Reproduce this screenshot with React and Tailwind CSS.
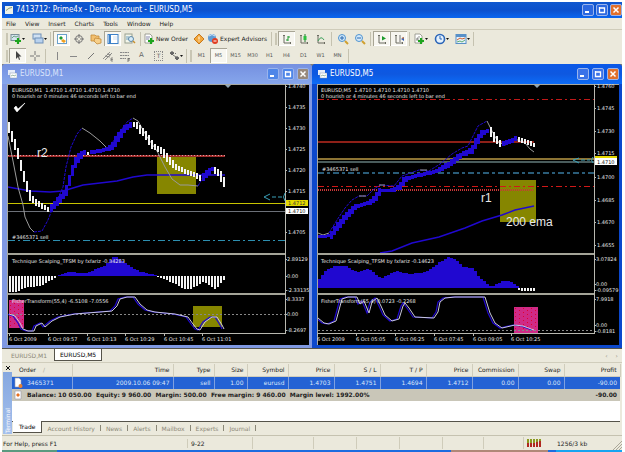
import React, { useState } from "react";

const BLUE = "#2008d0";
const WHITE = "#f4f4f4";
const GREY = "#9a9a9a";
const OLIVE = "#868600";

// linear interpolation on a list of [x, y] points
const at = (pts, x) => {
  for (let i = 1; i < pts.length; i++) {
    if (x <= pts[i][0]) {
      const [x0, y0] = pts[i - 1];
      const [x1, y1] = pts[i];
      return y0 + ((y1 - y0) * (x - x0)) / (x1 - x0);
    }
  }
  return pts[pts.length - 1][1];
};

const steps = (from, to, step) => {
  const out = [];
  for (let x = from; x <= to; x += step) out.push(x);
  return out;
};

const chartM1 = {
  x: 7,
  text: 12,
  header: "EURUSD,M1  1.4710 1.4710 1.4710 1.4710",
  sub: "0 hourish or 0 minutes 46 seconds left to bar end",
  axisX: 285,
  marker: 228,
  candles: [
    [WHITE, [[9, 127], [13, 140], [17, 149], [20, 162], [25, 180], [31, 198], [36, 202], [43, 207], [49, 210]]],
    [BLUE, [[51, 208], [55, 204], [60, 198], [67, 189], [70, 176], [74, 164], [80, 155], [84, 152]]],
    [WHITE, [[88, 153], [90, 153]]],
    [BLUE, [[91, 152], [97, 151], [108, 149], [113, 145], [118, 137], [125, 128], [132, 124]]],
    [WHITE, [[134, 124], [137, 125], [140, 129], [147, 137], [153, 146], [162, 151], [168, 159], [175, 167], [185, 171], [195, 175], [202, 179]]],
    [BLUE, [[203, 177], [207, 173], [212, 169], [214, 170]]],
    [WHITE, [[215, 170], [220, 174], [225, 184]]],
  ],
  bands: [
    [GREY, "8,136 13,161 18,187 23,205 25,217 30,228 34,232"],
    [BLUE, "34,232 42,231 48,220 53,207 58,198 63,187 66,167 71,147 77,134 82,128"],
    [GREY, "82,128 90,133 100,141 108,149"],
    [BLUE, "108,149 117,136 127,122 133,118"],
    [GREY, "133,118 138,121 147,137 157,151 160,157 165,167 172,179 180,185 188,185 198,186"],
    [BLUE, "198,186 203,177 208,170 213,168"],
  ],
  ema: "8,187 30,191 50,192 63,191 83,185 117,181 133,177 147,175 225,175",
  zero: 276,
  hist: [
    [WHITE, [[9, 292], [17, 292], [22, 288], [28, 287], [40, 286], [48, 281], [56, 277]]],
    [BLUE, [[58, 275], [67, 272], [85, 273], [95, 269], [103, 266], [109, 260], [112, 257], [116, 257], [122, 262], [130, 267], [140, 272], [155, 275]]],
    [WHITE, [[157, 277], [165, 280], [175, 284], [182, 289], [190, 289], [197, 285], [203, 281], [210, 287], [215, 289], [222, 281], [225, 278]]],
  ],
  histTitle: "Technique Scalping_TFSM by fxfariz -0.34283",
  fisherTitle: "FisherTransform(55,4) -6.5108 -7.0556",
  fisher:
    "9,314 15,316 20,323 23,329 28,331 34,331 36,326 42,323 45,327 52,321 60,317 75,314 100,312 112,311 117,306 120,299 127,297 135,297 140,304 147,310 155,312 175,314 188,317 193,324 197,329 200,330 205,322 212,317 217,317 222,325 224,329",
  fisherZero: 314,
  scale: [
    ["1.4740", 86], ["1.4735", 107], ["1.4730", 128], ["1.4725", 149], ["1.4720", 170], ["1.4715", 191], ["1.4705", 232],
    ["2.89129", 259], ["0.00", 276], ["-2.33135", 290], ["8.3337", 299], ["0.00", 314], ["-8.2697", 330],
  ],
  times: [["6 Oct 2009", 9], ["6 Oct 09:57", 48], ["6 Oct 10:13", 87], ["6 Oct 10:29", 125], ["6 Oct 10:45", 164], ["6 Oct 11:01", 202]],
};

const chartM5 = {
  x: 317,
  text: 321,
  header: "EURUSD,M5  1.4710 1.4710 1.4710 1.4710",
  sub: "0 hourish or 4 minutes 46 seconds left to bar end",
  axisX: 594,
  marker: 537,
  candles: [
    [BLUE, [[319, 237], [330, 236], [337, 227], [345, 217], [355, 207], [369, 203], [375, 198], [380, 191], [392, 190], [399, 187], [405, 179], [415, 176], [429, 173], [439, 170], [449, 164], [459, 156], [465, 153], [472, 149], [477, 140], [482, 133], [488, 131]]],
    [WHITE, [[491, 132], [495, 138], [501, 144]]],
    [BLUE, [[503, 144], [510, 141], [517, 138]]],
    [WHITE, [[519, 139], [527, 142], [534, 145]]],
  ],
  bands: [
    [GREY, "318,233 323,235 329,233"],
    [BLUE, "329,233 337,220 345,208 352,200 359,196 367,196 374,189 380,185 394,186 402,176 419,170 429,171 440,164 452,154 462,148 468,146 473,136 478,126 487,121"],
    [GREY, "359,196 366,196"],
    [GREY, "379,185 385,185"],
    [GREY, "420,170 427,170"],
    [GREY, "487,121 492,131 498,142 505,145 515,139 525,143 530,149 534,152"],
  ],
  ema: "380,253 392,251 412,243 439,237 465,228 482,221 502,215 515,210 534,206",
  zero: 288,
  hist: [
    [BLUE, [[318, 279], [325, 270], [334, 266], [345, 266], [355, 272], [367, 269], [380, 278], [395, 271], [409, 274], [425, 272], [437, 263], [447, 257], [454, 259], [462, 267], [472, 268], [478, 277], [485, 283], [490, 287], [495, 284], [502, 281], [508, 281], [517, 287]]],
    [WHITE, [[518, 290], [524, 291], [534, 291]]],
  ],
  histTitle: "Technique Scalping_TFSM by fxfariz -0.14623",
  fisherTitle: "FisherTransform(55,4) 0.0723 -0.2268",
  fisher:
    "318,318 324,323 329,324 336,321 339,310 342,299 348,297 357,297 360,304 364,301 369,313 372,302 377,298 381,306 385,315 392,321 399,319 403,306 405,303 409,308 415,317 434,318 438,312 440,302 445,298 455,297 485,297 490,313 495,323 502,328 515,325 523,326 534,330",
  fisherZero: 330,
  scale: [
    ["1.4760", 86], ["1.4745", 108], ["1.4730", 131], ["1.4715", 153], ["1.4700", 177], ["1.4685", 200], ["1.4670", 222], ["1.4655", 245],
    ["3.07824", 259], ["0.00", 284], ["-0.09579", 290], ["7.9918", 299], ["0.00", 325], ["-0.8181", 331],
  ],
  times: [["6 Oct 2009", 317], ["6 Oct 05:05", 356], ["6 Oct 06:25", 395], ["6 Oct 07:45", 434], ["6 Oct 09:05", 473], ["6 Oct 10:25", 511]],
};

const Rule = ({ c, y, to, stroke, dash, w = 1 }) => (
  <path d={`M${c.x + 1} ${y + w / 2}H${to || c.axisX}`} stroke={stroke} strokeDasharray={dash} strokeWidth={w} />
);

function PinkBox({ x, y, w, h }) {
  return (
    <g>
      <rect x={x} y={y} width={w} height={h} fill="#cf2a86" />
      {steps(x + 1, x + w - 2, 4).map((dx, i) =>
        steps(y + 1 + (i % 2) * 2, y + h - 2, 4).map((dy) => (
          <rect key={`${dx}-${dy}`} x={dx} y={dy} width="1" height="1" fill="#e00030" />
        ))
      )}
    </g>
  );
}

// price panel, histogram panel and fisher panel share one x axis
function Chart({ c, lines, boxes, notes, tags, label }) {
  return (
    <svg
      role="img"
      aria-label={label}
      viewBox={`${c.x} 84 302 261`}
      className="block w-full bg-black font-['DejaVu_Sans',sans-serif] text-[5px]"
      fill="#e8e8e8"
    >
      <g shapeRendering="crispEdges" fill="none">
        {boxes}
        {lines}
      </g>
      <g fill="none">
        <polyline points={c.ema} stroke={BLUE} strokeWidth="1.4" />
        {c.bands.map(([stroke, points]) => (
          <polyline key={points} points={points} stroke={stroke} strokeDasharray={stroke === BLUE ? "3 1" : undefined} />
        ))}
      </g>
      <g shapeRendering="crispEdges">
        {c.candles.map(([fill, pts], i) =>
          steps(pts[0][0], pts[pts.length - 1][0], 3).map((x) => {
            const y = at(pts, x);
            const h = Math.min(11, 3 + Math.abs(at(pts, x + 2) - at(pts, x - 2)) * 1.2);
            return <rect key={`${i}-${x}`} x={x - 1} y={Math.round(y - h / 2)} width={fill === BLUE ? 3 : 2} height={Math.round(h)} fill={fill} />;
          })
        )}
        {c.hist.map(([fill, pts], i) =>
          steps(pts[0][0], pts[pts.length - 1][0], 3).map((x) => {
            const y = at(pts, x);
            return (
              <rect key={`${i}-${x}`} x={x} y={Math.min(y, c.zero)} width={fill === BLUE ? 3 : 2} height={Math.max(1, Math.abs(y - c.zero))} fill={fill} />
            );
          })
        )}
        <Rule c={c} y={c.fisherZero} stroke="#888" dash="2 2" />
      </g>
      <polyline points={c.fisher} fill="none" stroke={BLUE} strokeWidth="1.2" transform="translate(-2 0)" />
      <polyline points={c.fisher} fill="none" stroke="#c9c9dd" strokeWidth="1" />

      <g shapeRendering="crispEdges">
        <path d={`M${c.x} 84h302v1H${c.x + 1}V345h-1z`} fill="#a9a9a0" />
        <path d={`M${c.x} 253h${c.axisX - c.x}v2H${c.x}zM${c.x} 293h${c.axisX - c.x}v2H${c.x}z`} fill="#a4a498" />
        <path d={`M${c.x} 333.5H${c.axisX}M${c.axisX + 0.5} 84V334`} stroke="#b8b8b0" />
        {c.scale.map(([t, y], i) => (
          <rect key={i} x={c.axisX} y={y} width="2" height="1" fill="#b8b8b0" />
        ))}
        {c.times.map(([t, x]) => (
          <rect key={t} x={x} y="333" width="1" height="3" fill="#b8b8b0" />
        ))}
      </g>
      <path d={`M${c.marker - 3} 85h6l-3 3z`} fill="#8fa5b5" />

      <text x={c.text} y="92" xmlSpace="preserve">{c.header}</text>
      <text x={c.text} y="98">{c.sub}</text>
      <text x={c.text} y="263">{c.histTitle}</text>
      <text x={c.text} y="303">{c.fisherTitle}</text>
      {c.scale.map(([t, y], i) => (
        <text key={i} x={c.axisX + (y > 254 ? 2 : 3)} y={y + 2}>{t}</text>
      ))}
      {c.times.map(([t, x]) => (
        <text key={t} x={x} y="341">{t}</text>
      ))}
      {notes}
      {tags}
    </svg>
  );
}

const m1Lines = (
  <>
    <Rule c={chartM1} y={155} to={225} stroke="#a02c2c" w={2} />
    <Rule c={chartM1} y={155} to={225} stroke="#d8a0a0" dash="1 2" />
    <Rule c={chartM1} y={203} stroke="#c8c400" />
    <Rule c={chartM1} y={211} stroke="#6c7078" />
    <Rule c={chartM1} y={240} stroke="#2d8fb0" dash="7 3 2 3" />
  </>
);

const m5Lines = (
  <>
    <Rule c={chartM5} y={99} stroke="#c01818" dash="6 3 2 3" />
    <Rule c={chartM5} y={141} to={534} stroke="#8e2018" w={2} />
    <Rule c={chartM5} y={158} stroke="#8c7434" w={2} />
    <Rule c={chartM5} y={161} stroke="#4a5c5c" w={2} />
    <Rule c={chartM5} y={172} stroke="#2a5c78" dash="6 3 3 3" w={2} />
    <Rule c={chartM5} y={186} stroke="#d01818" dash="6 3 2 3" />
    <Rule c={chartM5} y={189} to={534} stroke="#c83838" dash="1 1" w={2} />
  </>
);

const NOTE = "font-['Liberation_Sans',sans-serif] text-[12px]";

const m1Notes = (
  <>
    <path d="M14 108l3 4 8-9-7 6-2-3z" fill="#fff" stroke="#fff" strokeWidth=".6" />
    <text x="37" y="157" className={NOTE}>r2</text>
    <text x="12" y="239">#3465371 sell</text>
    <path d="M270 194l-6 3 6 3M272 197h4M278 197h4M285 193q-3 4 0 8" stroke="#3aa0b8" fill="none" />
  </>
);

const m5Notes = (
  <>
    <text x="481" y="202" className={NOTE}>r1</text>
    <text x="506" y="226" className={NOTE}>200 ema</text>
    <text x="322" y="171">#3465371 sell</text>
    <path d="M579 158l-6 2 6 3M581 160h4M587 160h3M593 157q-3 3 0 6" stroke="#3aa0b8" fill="none" />
  </>
);

const m1Tags = (
  <>
    <rect x="286" y="200" width="22" height="6" fill="#e4d800" />
    <text x="288" y="205" fill="#333">1.4712</text>
    <rect x="286" y="208" width="22" height="6" fill="#fff" />
    <text x="288" y="213" fill="#111">1.4710</text>
  </>
);

const m5Tags = (
  <>
    <rect x="595" y="156" width="22" height="3" fill="#e4d800" />
    <rect x="595" y="158" width="22" height="7" fill="#fff" />
    <text x="597" y="164" fill="#111">1.4710</text>
  </>
);

/* ---------- icons ---------- */

const Svg = ({ children, w = 12 }) => (
  <svg aria-hidden="true" width={w} height="12" viewBox={`0 0 ${w} 12`} fill="none" className="shrink-0">
    {children}
  </svg>
);

const Plus = ({ x, y }) => <path d={`M${x} ${y - 3}v6M${x - 3} ${y}h6`} stroke="#1ea51e" strokeWidth="2.2" />;
const Axes = () => <path d="M3 2v8h7M2 3l1-1 1 1M9 9l1 1-1 1" stroke="#6b6b60" />;
const Doc = () => <path d="M2 1h5l2 2v7H2z" fill="#fff" stroke="#8a8a80" strokeWidth=".8" />;

const ICONS = {
  newChart: <><rect x="1" y="1.500" width="8" height="6" fill="#d5e4ee" stroke="#7a8f98" /><path d="M2 5l2-2 2 1 2-1" stroke="#55906a" strokeWidth=".8" /><Plus x={8} y={8} /></>,
  profiles: <><rect x="1" y="1" width="8" height="5" fill="#cfe0f2" stroke="#6f90b8" /><rect x="3" y="5" width="8" height="5" fill="#b9d2ee" stroke="#6f90b8" /></>,
  market: <><rect x="1.500" y="1.500" width="9" height="9" fill="#fff" stroke="#6aa0cc" /><path d="M3 5l2-2 2 2-2 2z" fill="#1f9a30" /><path d="M5 8l2-2 3 2-2 2z" fill="#f0a020" /></>,
  target: <><circle cx="6" cy="6" r="3.500" stroke="#777" /><path d="M6 1v4M6 7v4M1 6h4M7 6h4" stroke="#777" /></>,
  folder: <><path d="M1 2h4l1 1h3v5H1z" fill="#f2c070" stroke="#c48a38" strokeWidth=".8" /><path d="M5 5l6 1v4l-4 1-3-3z" fill="#f7d08a" stroke="#c48a38" strokeWidth=".8" /></>,
  terminal: <><rect x="1" y="1.500" width="10" height="9" fill="#fff" stroke="#3c80c8" /><path d="M3 2v8" stroke="#3c80c8" strokeWidth="2" /><path d="M6 4h4M6 6h4" stroke="#cfdff0" /></>,
  tester: <><rect x="1" y="1" width="7" height="9" fill="#f4f6ea" stroke="#98a090" /><path d="M2 4h3M2 6h3" stroke="#6f9fc0" /><circle cx="7" cy="6" r="2.500" fill="#d6ebf8" stroke="#5d88a8" /><path d="M9 8l2 2" stroke="#c8902c" strokeWidth="1.500" /></>,
  order: <><Doc /><path d="M3 4h4M3 6h3" stroke="#88a" /><Plus x={8} y={8} /></>,
  meta: <><path d="M6 1l5 5-5 5-5-5z" fill="#f2a83c" stroke="#c8781c" /><path d="M6 3.500v3M6 7.500v1" stroke="#fff" /></>,
  expert: <><circle cx="5" cy="5" r="4" fill="#5f9bd4" /><path d="M2 3q3-3 6 0" stroke="#d8e8f8" /><circle cx="8" cy="8" r="3" fill="#e03c20" /><path d="M6.500 8h3" stroke="#fff" /></>,
  bars: <><Axes /><path d="M7 3v5M7 4h2M5 7h2" stroke="#1c9a2c" /></>,
  candle: <><Axes /><path d="M7 1v8" stroke="#1c7a2c" /><rect x="5.500" y="3" width="3" height="4" fill="#2cc040" /></>,
  line: <><Axes /><path d="M3 8q3-6 6-1" stroke="#3aa05a" /></>,
  zoomIn: <><path d="M8 8l3 3" stroke="#d0a030" strokeWidth="2" /><circle cx="5" cy="5" r="3.500" fill="#d4e9fa" stroke="#4f93cf" /><path d="M3 5h4M5 3v4" stroke="#2868b0" /></>,
  zoomOut: <><path d="M8 8l3 3" stroke="#d0a030" strokeWidth="2" /><circle cx="5" cy="5" r="3.500" fill="#d4e9fa" stroke="#4f93cf" /><path d="M3 5h4" stroke="#2868b0" /></>,
  scroll: <><Axes /><path d="M6 3l4 2.500-4 2z" fill="#1c9a2c" /></>,
  shift: <><Axes /><path d="M7 2v7" stroke="#777" /><path d="M11 4L8 6l3 2z" fill="#3060c0" /><path d="M9 5h2" stroke="#e07020" /></>,
  indicators: <><Doc /><path d="M4 8q0-5 3-4M3 6h3" stroke="#777" strokeWidth=".8" /><Plus x={8} y={8} /></>,
  clock: <><circle cx="6" cy="6" r="4.500" fill="#e4f1fc" stroke="#2c66b8" strokeWidth="1.600" /><path d="M6 3v3h2" stroke="#2c66b8" /></>,
  template: <><rect x="1" y="1.500" width="10" height="9" fill="#e6f1fa" stroke="#5890c8" /><path d="M1 3h10" stroke="#5890c8" strokeWidth="2" /><path d="M2 7l3-2 2 1 3-1" stroke="#d06030" /><path d="M2 9l3-1 2 1 3-2" stroke="#3a9a50" strokeWidth=".8" /></>,
  cursor: <path d="M4 1v8l2-2 1 3 1-.500-1-3h2.500z" fill="#444" />,
  cross: <path d="M6 1v4M6 7v4M1 6h4M7 6h4" stroke="#777" />,
  vline: <path d="M6.500 2v8" stroke="#888" />,
  hline: <path d="M2 6.500h7" stroke="#888" />,
  trend: <path d="M3 9l6-6" stroke="#777" />,
  channel: <><path d="M1 9l7-7M3 10l7-7M3 6l5 1M5 4l4 1" stroke="#777" strokeWidth=".8" /><path d="M9 8h2M9 8v3h2M9 9.500h2" stroke="#555" strokeWidth=".6" /></>,
  fibo: <><path d="M1 2.500h9M1 5.500h9M1 8.500h6" stroke="#888" strokeDasharray="2 .5" /><path d="M9 8v4M9 8.500h2M9 10h2" stroke="#555" strokeWidth=".7" /></>,
  arrows: <path d="M2 3l2-1.500L6 3 4 5zM5 5l3 2M7 8l2-1.500L11 8 9 10zM7 4l1-1" stroke="#555" strokeWidth=".8" fill="#666" />,
};

const Caret = () => (
  <svg aria-hidden="true" width="3" height="2" viewBox="0 0 3 2" className="shrink-0"><path d="M0 0h3L1.500 2z" fill="#111" /></svg>
);

const Grip = () => <span className="mx-px h-3 w-[2px] shrink-0 border-x border-[#c9c6b4]" />;
const Sep = () => <span className="mx-[2px] h-[14px] w-px shrink-0 bg-[#c5c2b0]" />;

function Tool({ icon, label, text, glyph, pressed, menu }) {
  return (
    <button
      type="button"
      title={label || text}
      aria-label={label || text}
      className={`flex h-[15px] min-w-[17px] shrink-0 items-center justify-center ${
        pressed ? "bg-[#f7f6f0] shadow-[inset_1px_1px_0_#a8a595,inset_-1px_-1px_0_#fff]" : ""
      }`}
    >
      {icon && <Svg>{ICONS[icon]}</Svg>}
      {glyph}
      {text && icon && <span className="pl-px pr-[2px]">{text}</span>}
      {menu && <Caret />}
    </button>
  );
}

function WinButton({ kind, tone, label }) {
  return (
    <button type="button" aria-label={label} className={`flex size-3 items-center justify-center rounded-[2px] border border-[#9ab4ec] ${tone}`}>
      <svg aria-hidden="true" width="8" height="8" viewBox="0 0 8 8" fill="none" stroke="#fff">
        {kind === "min" && <path d="M1 6h4" strokeWidth="2" />}
        {kind === "max" && <path d="M1.500 1v5.500h5V2h-5" strokeWidth="1.300" />}
        {kind === "close" && <path d="M1.500 1.500l5 5M6.500 1.500l-5 5" strokeWidth="1.500" />}
      </svg>
    </button>
  );
}

const TITLE = "grow font-['DejaVu_Sans_Condensed','DejaVu_Sans',sans-serif] text-[8px] leading-none font-medium";

function ChartWindow({ title, active, children }) {
  const tone = active ? "bg-[#3a72e8]" : "bg-[#4f86e8]";
  return (
    <section className={`min-w-0 rounded-t-[4px] pb-[3px] pl-[5px] pr-[3px] ${active ? "bg-[#0c48cc]" : "bg-[#7f98e2]"}`}>
      <header
        className={`-ml-[5px] -mr-[3px] flex h-5 items-center gap-[3px] rounded-t-[4px] pl-[6px] pr-[3px] text-white ${
          active ? "bg-linear-to-b from-[#0a58e8] via-[#0e58e0] to-[#0c6cf8]" : "bg-linear-to-b from-[#7590e0] to-[#86a6ec]"
        }`}
      >
        <Svg w={9}>
          <rect x="0" y="2" width="7" height="5" fill="#e8eefa" />
          <rect x="2" y="5" width="7" height="5" fill="#fff" stroke="#89a" strokeWidth=".5" />
          <path d="M3 8l2-1 1 1 2-1" stroke="#5a8a6a" strokeWidth=".6" />
        </Svg>
        <h2 className={`${TITLE} ${active ? "" : "text-[#dbe4fa]"}`}>{title}</h2>
        <WinButton kind="min" tone={tone} label={`Minimize ${title}`} />
        <WinButton kind="max" tone={tone} label={`Maximize ${title}`} />
        <WinButton kind="close" tone={active ? "bg-[#e0702c]" : "bg-[#98897c]"} label={`Close ${title}`} />
      </header>
      {children}
    </section>
  );
}

const COLUMNS = [
  ["Order", "w-[60px]"], ["Time", "w-[101px]"], ["Type", "w-[41px]"], ["Size", "w-[33px]"], ["Symbol", "w-[41px]"], ["Price", "w-[46px]"],
  ["S / L", "w-[46px]"], ["T / P", "w-[46px]"], ["Price", "w-[46px]"], ["Commission", "w-[46px]"], ["Swap", "w-[46px]"], ["Profit", "w-[56px]"],
];
const ORDER = ["3465371", "2009.10.06 09:47", "sell", "1.00", "eurusd", "1.4703", "1.4751", "1.4694", "1.4712", "0.00", "0.00", "-90.00"];
const TABS = ["Trade", "Account History", "News", "Alerts", "Mailbox", "Experts", "Journal"];

function Terminal() {
  const [tab, setTab] = useState("Trade");
  return (
    <section className="flex pt-px">
      <div className="flex w-[10px] shrink-0 flex-col pl-px">
        <button type="button" aria-label="Close terminal" className="flex h-2 items-center justify-center">
          <svg aria-hidden="true" width="4" height="4" viewBox="0 0 4 4"><path d="M0 0l4 4M4 0L0 4" stroke="#111" /></svg>
        </button>
        <div className="flex grow items-end justify-center bg-linear-to-b from-[#86a8e0] to-[#a4c0ec] pb-px">
          <span className="rotate-180 text-[6px] leading-none text-white [writing-mode:vertical-rl]">Terminal</span>
        </div>
      </div>
      <div className="min-w-0 grow pr-[2px]">
        <div className="h-[58px] border-b border-[#55534a] bg-white">
          <table className="w-full table-fixed border-collapse text-right leading-none">
            <thead>
              <tr className="h-3 bg-[#ebe9dc]">
                {COLUMNS.map(([name, width], i) => (
                  <th key={i} scope="col" className={`${width} border-r border-b border-[#d0cdbc] p-0 pr-[3px] font-normal ${i === 0 ? "pl-[7px] text-left" : ""}`}>
                    {name}{i === 0 && <span className="pl-[7px] text-[#aaa798]">/</span>}
                  </th>
                ))}
              </tr>
            </thead>
            <tbody>
              <tr className="h-3 bg-[#2462d4] text-[#dce6fa]">
                {ORDER.map((v, i) => (
                  <td key={i} className={`border-r border-[#7fa0e0] p-0 pr-[3px] last:border-r-0 ${i === 0 ? "text-left" : ""}`}>
                    {i === 0 ? (
                      <span className="flex items-center gap-1 pl-px">
                        <Svg w={10}><path d="M2 1h4l2 2v7H2z" fill="#fff" stroke="#99a" strokeWidth=".6" /><circle cx="7.500" cy="9" r="2" fill="#e88030" /></Svg>
                        {v}
                      </span>
                    ) : v}
                  </td>
                ))}
              </tr>
              <tr className="h-3 bg-[#c9c6b8] font-bold">
                <td colSpan={11} className="p-0 text-left">
                  <span className="flex items-center gap-1 pl-px">
                    <Svg w={10}><path d="M2 2h6v8H2z" fill="#fff" stroke="#99a" strokeWidth=".6" /><path d="M5 4l2 2-2 2-2-2z" fill="#e87020" /></Svg>
                    <span className="whitespace-pre">Balance: 10 050.00  Equity: 9 960.00  Margin: 500.00  Free margin: 9 460.00  Margin level: 1992.00%</span>
                  </span>
                </td>
                <td className="p-0 pr-[3px]">-90.00</td>
              </tr>
            </tbody>
          </table>
        </div>
        <nav aria-label="Terminal" className="flex h-3 items-center pl-px text-[#8b8878]">
          {TABS.map((t) =>
            t === tab ? (
              <button key={t} type="button" onClick={() => setTab(t)} className="-mt-[2px] h-3 border-r border-b border-[#55534a] bg-white px-[6px] text-black">
                {t}
              </button>
            ) : (
              <React.Fragment key={t}>
                <button type="button" onClick={() => setTab(t)} className="px-[5px]">{t}</button>
                <span className="h-[6px] w-px bg-[#8b8878]" />
              </React.Fragment>
            )
          )}
        </nav>
      </div>
    </section>
  );
}

export default function App() {
  const [period, setPeriod] = useState("M5");
  return (
    <div className="min-h-screen bg-white pt-[2px] pl-[2px] pr-[3px] font-['DejaVu_Sans',sans-serif] text-[6px] text-[#222]">
      <div className="bg-[#ebe9dc]">
        <header className="flex h-4 items-center gap-[3px] bg-linear-to-b from-[#1058d0] via-[#0c50cc] to-[#0a66f0] pl-[3px] text-white">
          <Svg w={8}><path d="M0 2h8v8H0z" fill="#eef2e8" /><path d="M1 6q3-3 6-3v1q-3 0-6 3z" fill="#8a9a70" /></Svg>
          <h1 className={TITLE}>7413712: Prime4x - Demo Account - EURUSD,M5</h1>
          <div className="flex gap-[2px]">
            <WinButton kind="min" tone="bg-[#2c68e0]" label="Minimize" />
            <WinButton kind="max" tone="bg-[#2c68e0]" label="Restore" />
            <WinButton kind="close" tone="bg-[#e0702c]" label="Close" />
          </div>
        </header>

        <nav aria-label="Menu" className="flex h-3 items-center border-b border-[#cfccba] pl-[4px]">
          {["File", "View", "Insert", "Charts", "Tools", "Window", "Help"].map((m) => (
            <button key={m} type="button" className="pr-[9px]">{m}</button>
          ))}
        </nav>

        <div role="toolbar" aria-label="Standard" className="flex h-[17px] items-center overflow-hidden pl-[3px]">
          <Grip />
          <Tool icon="newChart" label="New chart" menu />
          <span className="w-[5px]" />
          <Tool icon="profiles" label="Profiles" menu />
          <Sep />
          <Tool icon="market" label="Market watch" pressed />
          <Tool icon="target" label="Data window" />
          <Tool icon="folder" label="Navigator" />
          <Tool icon="terminal" label="Terminal" pressed />
          <Tool icon="tester" label="Strategy tester" />
          <Sep />
          <Tool icon="order" text="New Order" />
          <Tool icon="meta" label="MetaEditor" />
          <Tool icon="expert" text="Expert Advisors" />
          <Sep />
          <Grip />
          <Tool icon="bars" label="Bar chart" pressed />
          <Tool icon="candle" label="Candlesticks" />
          <Tool icon="line" label="Line chart" />
          <Sep />
          <Tool icon="zoomIn" label="Zoom in" />
          <Tool icon="zoomOut" label="Zoom out" />
          <Sep />
          <Tool icon="scroll" label="Auto scroll" pressed />
          <Tool icon="shift" label="Chart shift" pressed />
          <Sep />
          <Tool icon="indicators" label="Indicators" menu />
          <span className="w-[4px]" />
          <Tool icon="clock" label="Periods" menu />
          <span className="w-[4px]" />
          <Tool icon="template" label="Templates" menu />
          <Sep />
        </div>

        <div role="toolbar" aria-label="Line studies and periods" className="flex h-[17px] items-center overflow-hidden pl-[3px]">
          <Grip />
          <Tool icon="cursor" label="Cursor" pressed />
          <Tool icon="cross" label="Crosshair" />
          <Sep />
          <Tool icon="vline" label="Vertical line" />
          <Tool icon="hline" label="Horizontal line" />
          <Tool icon="trend" label="Trendline" />
          <Tool icon="channel" label="Channel" />
          <Tool icon="fibo" label="Fibonacci" />
          <Tool label="Text" glyph={<span className="text-[7px] text-[#666]">A</span>} />
          <Tool label="Text label" glyph={<span className="border border-dotted border-[#888] px-[2px] text-[6px] leading-[8px] text-[#666]">T</span>} />
          <Tool icon="arrows" label="Arrows" menu />
          <Sep />
          <Grip />
          {["M1", "M5", "M15", "M30", "H1", "H4", "D1", "W1", "MN"].map((p) => (
            <button
              key={p}
              type="button"
              onClick={() => setPeriod(p)}
              className={`h-[15px] w-[17px] shrink-0 text-[5px] text-[#555] ${p === period ? "bg-[#f7f6f0] shadow-[inset_1px_1px_0_#a8a595,inset_-1px_-1px_0_#fff]" : ""}`}
            >
              {p}
            </button>
          ))}
          <Sep />
        </div>

        <main className="grid grid-cols-2 bg-[#80807a]">
          <ChartWindow title="EURUSD,M1">
            <Chart
              c={chartM1}
              label="EURUSD one minute chart"
              lines={m1Lines}
              boxes={
                <>
                  <rect x="157" y="157" width="39" height="37" fill={OLIVE} />
                  <rect x="193" y="306" width="29" height="21" fill={OLIVE} />
                  <PinkBox x={9} y={300} w={15} h={28} />
                </>
              }
              notes={m1Notes}
              tags={m1Tags}
            />
          </ChartWindow>
          <ChartWindow title="EURUSD,M5" active>
            <Chart
              c={chartM5}
              label="EURUSD five minute chart"
              lines={m5Lines}
              boxes={
                <>
                  <rect x="500" y="180" width="36" height="42" fill={OLIVE} />
                  <PinkBox x={514} y={307} w={24} h={26} />
                </>
              }
              notes={m5Notes}
              tags={m5Tags}
            />
          </ChartWindow>
        </main>

        <nav aria-label="Charts" className="flex h-[15px] items-start border-t border-b border-t-[#55534a] border-b-[#d0cdbc] pl-[3px] text-[#8b8878]">
          <button type="button" className="h-3 pl-[6px] pr-[7px]">EURUSD,M1</button>
          <button type="button" className="h-3 border-x border-b border-[#55534a] bg-white px-[5px] text-black">EURUSD,M5</button>
          <span className="grow" />
          <button type="button" aria-label="Scroll left" className="h-3 px-1">‹</button>
          <button type="button" aria-label="Scroll right" className="h-3 px-1">›</button>
        </nav>

        <Terminal />

        <footer className="mt-px flex h-[15px] items-center border-t border-[#c5c2b0] pl-px">
          <span className="w-[184px]">For Help, press F1</span>
          <span className="w-[65px] border-l border-[#cfccba] pl-[3px]">9-22</span>
          <span className="h-3 w-[61px] border-l border-[#cfccba]" />
          <span className="h-3 w-[43px] border-l border-[#cfccba]" />
          <span className="h-3 w-[43px] border-l border-[#cfccba]" />
          <span className="h-3 w-[43px] border-l border-[#cfccba]" />
          <span className="h-3 w-[41px] border-l border-[#cfccba]" />
          <span className="h-3 w-[40px] border-l border-[#cfccba]" />
          <span className="flex h-3 grow items-center gap-4 border-l border-[#cfccba] pl-[3px]">
            <svg aria-hidden="true" width="14" height="8" viewBox="0 0 14 8" strokeWidth="2">
              <path d="M1 0v4M4 0v4M7 0v4M10 0v3M13 0v2" stroke="#8a9a20" />
              <path d="M1 4v4M4 4v4M7 4v4M10 3v5M13 2v6" stroke="#b02820" />
            </svg>
            1256/3 kb
          </span>
          <svg aria-hidden="true" width="9" height="9" viewBox="0 0 9 9" className="self-end" stroke="#aaa798">
            <path d="M0 9l9-9M3 9l6-6M6 9l3-3" />
          </svg>
        </footer>
        <div className="flex h-[2px] bg-[#1c6ce0]">
          <span className="w-[55px] bg-[#5a9a80]" />
          <span className="grow" />
          <span className="w-[97px] bg-[#b08878]" />
          <span className="w-[8px]" />
          <span className="w-[66px] bg-[#18a4f0]" />
        </div>
      </div>
    </div>
  );
}
